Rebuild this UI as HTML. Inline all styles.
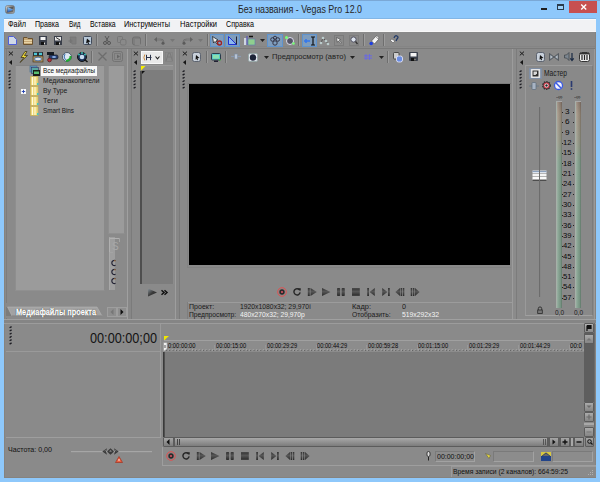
<!DOCTYPE html>
<html><head><meta charset="utf-8"><style>
html,body{margin:0;padding:0;width:600px;height:482px;overflow:hidden;background:#8ec8fb}
body{position:relative;font-family:"Liberation Sans", sans-serif}
div,span{position:absolute;box-sizing:border-box}
span{white-space:pre;transform-origin:0 0;display:block}
</style></head><body>
<div style="left:0px;top:0px;width:600px;height:1px;background:#7aa8d6;"></div>
<div style="left:4px;top:19px;width:592px;height:459px;background:#8a8a8a;"></div>
<div style="left:4px;top:477px;width:592px;height:1px;background:#86837f;"></div>
<span style="left:238px;top:4.58px;font-size:10.3px;line-height:10.3px;color:#262626;transform:scaleX(0.864);">Без названия - Vegas Pro 12.0</span>
<svg style="position:absolute;left:5px;top:5px;overflow:visible" width="10" height="9" viewBox="0 0 10 9"><defs><linearGradient id="ti1" x1="0" y1="0" x2="1" y2="1"><stop offset="0" stop-color="#e8e8e8"/><stop offset="0.5" stop-color="#7a7a7a"/><stop offset="1" stop-color="#d0d0d0"/></linearGradient><linearGradient id="ti2" x1="0" y1="0" x2="0" y2="1"><stop offset="0" stop-color="#9ad4ff"/><stop offset="1" stop-color="#1a50b0"/></linearGradient></defs><rect x="0.5" y="0.5" width="9" height="8" rx="2" fill="url(#ti1)" stroke="#6a6a6a" stroke-width="0.6"/><rect x="2" y="1.8" width="6.5" height="5.6" fill="#3a3a3a" opacity="0.55"/><path d="M2.5 2L8.5 4.8L2.5 7.5Z" fill="url(#ti2)"/></svg>
<div style="left:541px;top:8px;width:6px;height:2px;background:#1f1f1f;"></div>
<div style="left:557px;top:4px;width:7px;height:6px;border:1px solid #2a3a4a;border-top-width:2px;background:#9cd0f8"></div>
<div style="left:569px;top:1px;width:28px;height:12px;background:#c75050;"></div>
<svg style="position:absolute;left:580px;top:3px;overflow:visible" width="8" height="8" viewBox="0 0 8 8"><path d="M1.2 1.6L6.2 6.6M6.2 1.6L1.2 6.6" stroke="#fff" stroke-width="1.4"/></svg>
<div style="left:4px;top:18px;width:592px;height:1px;background:#82b6e6;"></div>
<div style="left:4px;top:19px;width:592px;height:13px;background:#f1f2f4;"></div>
<div style="left:4px;top:19px;width:592px;height:1px;background:#fbfbfb;"></div>
<div style="left:4px;top:31px;width:592px;height:1px;background:#f8f8f8;"></div>
<span style="left:8px;top:20.43px;font-size:9.3px;line-height:9.3px;color:#000;transform:scaleX(0.787);">Файл</span>
<span style="left:35px;top:20.43px;font-size:9.3px;line-height:9.3px;color:#000;transform:scaleX(0.764);">Правка</span>
<span style="left:69px;top:20.43px;font-size:9.3px;line-height:9.3px;color:#000;transform:scaleX(0.683);">Вид</span>
<span style="left:89.6px;top:20.43px;font-size:9.3px;line-height:9.3px;color:#000;transform:scaleX(0.744);">Вставка</span>
<span style="left:124.2px;top:20.43px;font-size:9.3px;line-height:9.3px;color:#000;transform:scaleX(0.793);">Инструменты</span>
<span style="left:179.8px;top:20.43px;font-size:9.3px;line-height:9.3px;color:#000;transform:scaleX(0.812);">Настройки</span>
<span style="left:225.8px;top:20.43px;font-size:9.3px;line-height:9.3px;color:#000;transform:scaleX(0.767);">Справка</span>
<div style="left:4px;top:32px;width:592px;height:15px;background:#8a8a8a;"></div>
<div style="left:4px;top:46px;width:592px;height:1px;background:#858585;"></div>
<div style="left:4px;top:48px;width:592px;height:1px;background:#7a7a7a;"></div>
<svg style="position:absolute;left:8px;top:36px;overflow:visible" width="9" height="9" viewBox="0 0 9 9"><path d="M0.5 0.5H5.5L8.5 3.5V8.5H0.5Z" fill="#cfd8e8" stroke="#4f5fd8"/></svg>
<svg style="position:absolute;left:23px;top:36px;overflow:visible" width="10" height="9" viewBox="0 0 10 9"><path d="M0.5 1.5H4L5 2.5H9.5V8.5H0.5Z" fill="#c8a977" stroke="#6b5230"/><path d="M1 4.5H9M1 6.5H9" stroke="#e8d5a8"/></svg>
<svg style="position:absolute;left:39px;top:36px;overflow:visible" width="8" height="9" viewBox="0 0 8 9"><rect x="0" y="0" width="8" height="9" fill="#3a3f4a"/><rect x="1.5" y="1" width="5" height="3" fill="#f4f4f4"/><rect x="2" y="6" width="4" height="3" fill="#111"/><rect x="5" y="6.5" width="1" height="2" fill="#ddd"/></svg>
<svg style="position:absolute;left:54px;top:36px;overflow:visible" width="8" height="9" viewBox="0 0 8 9"><rect x="0" y="0" width="8" height="9" fill="#3a3f4a"/><rect x="1" y="1" width="6" height="3.5" fill="#e8e8e8"/><path d="M2 1.5L6 4" stroke="#333"/><rect x="2" y="6" width="4" height="3" fill="#111"/><rect x="5" y="6.5" width="1" height="2" fill="#ddd"/></svg>
<svg style="position:absolute;left:68px;top:36px;overflow:visible" width="9" height="9" viewBox="0 0 9 9"><path d="M2 1H8V8H4Z" fill="#7e7e7e" stroke="#767676" stroke-width="0.8"/><path d="M0.5 5H4.5M2.5 3V7" stroke="#747474" stroke-width="1.2"/></svg>
<svg style="position:absolute;left:83px;top:36px;overflow:visible" width="9" height="9" viewBox="0 0 9 9"><rect x="0.5" y="0.5" width="8" height="8" rx="1" fill="#b8c8d8" stroke="#404a5a"/><path d="M4 2.5L7.5 5.5L5.5 6L6 8L5 8.3L4.5 6.5L3 7.5Z" fill="#111"/></svg>
<div style="left:96px;top:34px;width:1px;height:12px;background:#6e6e6e;"></div>
<div style="left:97px;top:34px;width:1px;height:12px;background:#9c9c9c;"></div>
<svg style="position:absolute;left:103px;top:36px;overflow:visible" width="8" height="9" viewBox="0 0 8 9"><path d="M2 0L5.5 6M6 0L2.5 6" stroke="#5a5a5a" stroke-width="1"/><circle cx="2" cy="7" r="1.5" fill="none" stroke="#555"/><circle cx="6" cy="7" r="1.5" fill="none" stroke="#555"/></svg>
<svg style="position:absolute;left:117px;top:36px;overflow:visible" width="10" height="9" viewBox="0 0 10 9"><rect x="0.5" y="0.5" width="5" height="6" rx="1" fill="none" stroke="#777"/><rect x="3.5" y="3.5" width="5.5" height="5.5" rx="1.5" fill="#8a8a8a" stroke="#777"/></svg>
<svg style="position:absolute;left:132px;top:36px;overflow:visible" width="10" height="9" viewBox="0 0 10 9"><rect x="0.5" y="1" width="8" height="8" rx="2" fill="#7e7e7e" stroke="#707070"/><rect x="3" y="3" width="5" height="6" fill="#888"/></svg>
<div style="left:145px;top:34px;width:1px;height:12px;background:#6e6e6e;"></div>
<div style="left:146px;top:34px;width:1px;height:12px;background:#9c9c9c;"></div>
<svg style="position:absolute;left:154px;top:37px;overflow:visible" width="11" height="8" viewBox="0 0 11 8"><path d="M2 2.5H6.5Q9.5 2.5 9.5 5.5" fill="none" stroke="#636363" stroke-width="1.6"/><path d="M2 2.5H6.5Q9.5 2.5 9.5 5.5" fill="none" stroke="#9a9a9a" stroke-width="0.5"/><path d="M0 2.5L3 0V5Z" fill="#636363"/><circle cx="9" cy="6.3" r="1.5" fill="#5a5a5a"/></svg>
<svg style="position:absolute;left:170.0px;top:38.5px;overflow:visible" width="5" height="3" viewBox="0 0 5 3"><path d="M0 0H5L2.5 3Z" fill="#777"/></svg>
<svg style="position:absolute;left:182px;top:37px;overflow:visible" width="11" height="8" viewBox="0 0 11 8"><path d="M9 2.5H4.5Q1.5 2.5 1.5 5.5" fill="none" stroke="#636363" stroke-width="1.6"/><path d="M9 2.5H4.5Q1.5 2.5 1.5 5.5" fill="none" stroke="#9a9a9a" stroke-width="0.5"/><path d="M11 2.5L8 0V5Z" fill="#636363"/><circle cx="2" cy="6.3" r="1.5" fill="#5a5a5a"/></svg>
<svg style="position:absolute;left:198.3px;top:38.5px;overflow:visible" width="5" height="3" viewBox="0 0 5 3"><path d="M0 0H5L2.5 3Z" fill="#777"/></svg>
<div style="left:207px;top:34px;width:1px;height:12px;background:#6e6e6e;"></div>
<div style="left:208px;top:34px;width:1px;height:12px;background:#9c9c9c;"></div>
<div style="left:210px;top:34px;width:14px;height:13px;background:#7f9dbd;border:1px solid #5f93cc"></div>
<svg style="position:absolute;left:212px;top:36px;overflow:visible" width="10" height="9" viewBox="0 0 10 9"><path d="M0.5 0.5L6 4L4 5L6 7.5L5 8L3 5.5L1.5 7Z" fill="#eee" stroke="#111" stroke-width="0.7"/><circle cx="7.5" cy="7" r="2" fill="none" stroke="#a02020" stroke-width="1.3"/></svg>
<div style="left:225px;top:34px;width:15px;height:13px;background:#7f9dbd;border:1px solid #5f93cc"></div>
<svg style="position:absolute;left:228px;top:36px;overflow:visible" width="9" height="9" viewBox="0 0 9 9"><path d="M0.5 0.5L8.5 8.5H0.5Z" fill="#8cb8f0" stroke="#2030d0"/><path d="M8.5 0.5V8.5" stroke="#223"/></svg>
<svg style="position:absolute;left:244px;top:35px;overflow:visible" width="12" height="10" viewBox="0 0 12 10"><rect x="0" y="3" width="2.5" height="7" fill="#cfd6e0"/><path d="M3 1V10" stroke="#5050c0"/><rect x="4" y="4" width="7" height="6" fill="#8fcf8f" stroke="#5a7ab0" stroke-width="0.6"/><path d="M5 1.5H9" stroke="#111" stroke-width="1.5"/></svg>
<svg style="position:absolute;left:260.0px;top:38.5px;overflow:visible" width="5" height="3" viewBox="0 0 5 3"><path d="M0 0H5L2.5 3Z" fill="#222"/></svg>
<div style="left:267px;top:34px;width:16px;height:13px;background:#7f9dbd;border:1px solid #5f93cc"></div>
<svg style="position:absolute;left:270px;top:36px;overflow:visible" width="10" height="10" viewBox="0 0 10 10"><circle cx="2.5" cy="3.5" r="1.8" fill="none" stroke="#334"/><circle cx="5" cy="1.8" r="1.6" fill="none" stroke="#334"/><circle cx="7.8" cy="3.5" r="1.8" fill="none" stroke="#334"/><circle cx="5" cy="7" r="2.2" fill="none" stroke="#334"/></svg>
<svg style="position:absolute;left:285px;top:36px;overflow:visible" width="10" height="9" viewBox="0 0 10 9"><circle cx="5" cy="5" r="3.5" fill="#556" stroke="#dde"/><circle cx="1.5" cy="1.5" r="1.5" fill="#7f7"/><circle cx="8.5" cy="7.5" r="1.3" fill="#7f7"/></svg>
<div style="left:298px;top:34px;width:1px;height:12px;background:#6e6e6e;"></div>
<div style="left:299px;top:34px;width:1px;height:12px;background:#9c9c9c;"></div>
<div style="left:302px;top:34px;width:15px;height:13px;background:#7f9dbd;border:1px solid #5f93cc"></div>
<svg style="position:absolute;left:304px;top:36px;overflow:visible" width="12" height="10" viewBox="0 0 12 10"><path d="M0 5H6M2 3V7" stroke="#3377ee" stroke-width="1.5"/><path d="M7 1H11M9 1V9M7 9H11" stroke="#111" stroke-width="1.2"/></svg>
<svg style="position:absolute;left:319px;top:36px;overflow:visible" width="11" height="10" viewBox="0 0 11 10"><path d="M2 7L4 2L7 5L9 8" stroke="#555" fill="none"/><circle cx="2" cy="7" r="1.3" fill="#bcc"/><circle cx="4" cy="2" r="1.3" fill="#bcc"/><circle cx="7" cy="5" r="1.3" fill="#bcc"/><circle cx="9" cy="8" r="1.3" fill="#bcc"/></svg>
<svg style="position:absolute;left:334px;top:35px;overflow:visible" width="10" height="11" viewBox="0 0 10 11"><rect x="0.5" y="0.5" width="9" height="10" fill="none" stroke="#7b7b7b"/><path d="M2.5 2.5L6.5 4.5L5 5.3L7.5 8L6.8 8.6L4.3 6L3.3 7.3Z" fill="#f0f0f0" stroke="#444" stroke-width="0.6"/></svg>
<svg style="position:absolute;left:349px;top:35px;overflow:visible" width="10" height="11" viewBox="0 0 10 11"><rect x="0.5" y="0.5" width="9" height="10" fill="none" stroke="#7d7d7d"/><circle cx="4.5" cy="4.5" r="2.6" fill="#dde4ee" stroke="#556"/><path d="M6.5 6.5L8.5 9" stroke="#333" stroke-width="1.3"/></svg>
<div style="left:363px;top:34px;width:1px;height:12px;background:#6e6e6e;"></div>
<div style="left:364px;top:34px;width:1px;height:12px;background:#9c9c9c;"></div>
<svg style="position:absolute;left:369px;top:35px;overflow:visible" width="10" height="11" viewBox="0 0 10 11"><path d="M2.5 6L6.5 1.5L9.5 4.5L5.5 9Z" fill="#f4f4f4" stroke="#555" stroke-width="0.7"/><path d="M6.5 1.5L8 0.5L9.8 2.5L9.5 4.5" fill="#ddd" stroke="#555" stroke-width="0.6"/><circle cx="2.2" cy="8.5" r="1.8" fill="#1f3fe0"/></svg>
<div style="left:383px;top:34px;width:1px;height:12px;background:#6e6e6e;"></div>
<div style="left:384px;top:34px;width:1px;height:12px;background:#9c9c9c;"></div>
<svg style="position:absolute;left:389px;top:35px;overflow:visible" width="10" height="11" viewBox="0 0 10 11"><path d="M1 5L4 8L6 6L3 4Z" fill="#eee" stroke="#555" stroke-width="0.6"/><path d="M5 3Q6 0 8 1Q10 2 8 4L7 6" fill="none" stroke="#223a66" stroke-width="1.3"/></svg>
<div style="left:4px;top:32px;width:1px;height:446px;background:#86837f;"></div>
<div style="left:6px;top:49px;width:1px;height:270px;background:#7d7d7d;"></div>
<svg style="position:absolute;left:8px;top:51px;overflow:visible" width="6" height="5" viewBox="0 0 6 5"><path d="M0.8 0.6L5 4.4M5 0.6L0.8 4.4" stroke="#1a1a1a" stroke-width="1"/></svg>
<svg style="position:absolute;left:8.7px;top:59.5px;overflow:visible" width="3" height="5" viewBox="0 0 3 5"><path d="M3 0V5L0 2.2Z" fill="#151515"/></svg>
<svg style="position:absolute;left:8.4px;top:70px;overflow:visible" width="3" height="20" viewBox="0 0 3 20"><path d="M0.6 1.8L2.6 0.6" stroke="#1c1c22" stroke-width="1.3"/><path d="M0.6 5.1L2.6 3.9" stroke="#1c1c22" stroke-width="1.3"/><path d="M0.6 8.4L2.6 7.2" stroke="#1c1c22" stroke-width="1.3"/><path d="M0.6 11.7L2.6 10.5" stroke="#1c1c22" stroke-width="1.3"/><path d="M0.6 15.0L2.6 13.8" stroke="#1c1c22" stroke-width="1.3"/><path d="M0.6 18.3L2.6 17.1" stroke="#1c1c22" stroke-width="1.3"/></svg>
<svg style="position:absolute;left:19px;top:51px;overflow:visible" width="9" height="12" viewBox="0 0 9 12"><path d="M6 0.5L2 6.5H5L1 11.5L8.5 4.5H5.5L8 0.5Z" fill="#f0dc3a" stroke="#3d3520" stroke-width="0.8"/></svg>
<svg style="position:absolute;left:33px;top:52px;overflow:visible" width="10" height="10" viewBox="0 0 10 10"><rect x="0" y="0" width="10" height="4" fill="#2a3038"/><rect x="1" y="0.8" width="3" height="2.4" fill="#4fc8d8"/><rect x="6" y="0.8" width="3" height="2.4" fill="#4fc8d8"/><rect x="0" y="4" width="10" height="6" fill="#a89060" stroke="#4a3a20" stroke-width="0.7"/><ellipse cx="5" cy="7" rx="3.5" ry="1.8" fill="#dde6ee" stroke="#2a5aa0" stroke-width="0.7"/></svg>
<svg style="position:absolute;left:47px;top:52px;overflow:visible" width="11" height="10" viewBox="0 0 11 10"><rect x="0" y="0" width="7" height="3" fill="#151a22"/><rect x="2" y="3" width="9" height="4" rx="1.5" fill="#2a3f70" stroke="#111" stroke-width="0.6"/><ellipse cx="7" cy="5" rx="2" ry="1" fill="#8ab0e8"/><circle cx="2.5" cy="8" r="1.8" fill="#c03040" stroke="#622"/></svg>
<svg style="position:absolute;left:62px;top:52px;overflow:visible" width="10" height="10" viewBox="0 0 10 10"><circle cx="5" cy="5" r="4.5" fill="#dde8f4" stroke="#334455" stroke-width="0.8"/><path d="M3 2Q1 5 3.5 8" stroke="#3a70b0" fill="none"/><path d="M8.5 4Q9 8 4 9" stroke="#22aa33" stroke-width="2" fill="none"/></svg>
<svg style="position:absolute;left:77px;top:52px;overflow:visible" width="11" height="10" viewBox="0 0 11 10"><circle cx="5" cy="5" r="4.5" fill="#1e3358" stroke="#111"/><circle cx="5" cy="5" r="2.3" fill="#c8dcf0"/><circle cx="2" cy="2.5" r="0.9" fill="#40d0c0"/><circle cx="8" cy="2.5" r="0.9" fill="#40d0c0"/><circle cx="5" cy="1" r="0.9" fill="#40d0c0"/><path d="M7.5 7.5L10.5 10" stroke="#111" stroke-width="1.5"/></svg>
<div style="left:91px;top:51px;width:1px;height:12px;background:#6e6e6e;"></div>
<div style="left:92px;top:51px;width:1px;height:12px;background:#9c9c9c;"></div>
<svg style="position:absolute;left:98px;top:52px;overflow:visible" width="9" height="9" viewBox="0 0 9 9"><path d="M0.5 0.5L8.5 8.5M8.5 0.5L0.5 8.5" stroke="#6d6d6d" stroke-width="1.3"/></svg>
<svg style="position:absolute;left:112px;top:51px;overflow:visible" width="11" height="11" viewBox="0 0 11 11"><rect x="0.5" y="0.5" width="10" height="10" rx="2" fill="none" stroke="#737373"/><rect x="2.5" y="2.5" width="6" height="6" fill="none" stroke="#7a7a7a"/><path d="M5 3.5L8 5.5L5 7.5Z" fill="#666"/></svg>
<div style="left:15px;top:65px;width:90px;height:226px;background:#9b9b9b;border-top:1px solid #858585;border-left:1px solid #8e8e8e;border-right:1px solid #8a8a8a;border-bottom:1px solid #909090"></div>
<div style="left:41px;top:66px;width:56px;height:10px;background:#f8f8f8;"></div>
<svg style="position:absolute;left:30px;top:66px;overflow:visible" width="10" height="10" viewBox="0 0 10 10"><rect x="0" y="0" width="7" height="6" fill="#6a9ac0" stroke="#3a6a90" stroke-width="0.6"/><rect x="1.5" y="1.5" width="7" height="6" fill="#5aa8a0" stroke="#336" stroke-width="0.6"/><rect x="3" y="4" width="7" height="6" fill="#1a1f1a"/><rect x="4" y="5.5" width="5" height="2.5" fill="#58c070"/></svg>
<span style="left:42.7px;top:67.23px;font-size:8px;line-height:8px;color:#111;transform:scaleX(0.799);">Все медиафайлы</span>
<svg style="position:absolute;left:30px;top:76px;overflow:visible" width="9" height="10" viewBox="0 0 9 10"><path d="M0.5 0.5H8V9.5H0.5Z" fill="#efdc80" stroke="#c8b050" stroke-width="0.7"/><path d="M2.5 1V9M5 1V9" stroke="#fffbe0" stroke-width="1"/><rect x="7" y="7" width="1.5" height="2" fill="#40c8c0"/></svg>
<span style="left:42.5px;top:76.83px;font-size:8px;line-height:8px;color:#1a1a1a;transform:scaleX(0.841);">Медианакопители</span>
<svg style="position:absolute;left:30px;top:86px;overflow:visible" width="9" height="10" viewBox="0 0 9 10"><path d="M0.5 0.5H8V9.5H0.5Z" fill="#efdc80" stroke="#c8b050" stroke-width="0.7"/><path d="M2.5 1V9M5 1V9" stroke="#fffbe0" stroke-width="1"/><rect x="7" y="7" width="1.5" height="2" fill="#40c8c0"/></svg>
<span style="left:42.5px;top:86.73px;font-size:8px;line-height:8px;color:#1a1a1a;transform:scaleX(0.848);">By Type</span>
<svg style="position:absolute;left:30px;top:96px;overflow:visible" width="9" height="10" viewBox="0 0 9 10"><path d="M0.5 0.5H8V9.5H0.5Z" fill="#efdc80" stroke="#c8b050" stroke-width="0.7"/><path d="M2.5 1V9M5 1V9" stroke="#fffbe0" stroke-width="1"/><rect x="7" y="7" width="1.5" height="2" fill="#40c8c0"/></svg>
<span style="left:42.5px;top:96.63px;font-size:8px;line-height:8px;color:#1a1a1a;transform:scaleX(0.903);">Теги</span>
<svg style="position:absolute;left:30px;top:106px;overflow:visible" width="9" height="10" viewBox="0 0 9 10"><path d="M0.5 0.5H8V9.5H0.5Z" fill="#efdc80" stroke="#c8b050" stroke-width="0.7"/><path d="M2.5 1V9M5 1V9" stroke="#fffbe0" stroke-width="1"/><rect x="7" y="7" width="1.5" height="2" fill="#40c8c0"/></svg>
<span style="left:42.5px;top:106.53px;font-size:8px;line-height:8px;color:#1a1a1a;transform:scaleX(0.792);">Smart Bins</span>
<svg style="position:absolute;left:21px;top:89px;overflow:visible" width="5" height="5" viewBox="0 0 5 5"><rect x="0" y="0" width="5" height="5" fill="#f8f8f8"/><path d="M0.8 2.5H4.2M2.5 0.8V4.2" stroke="#2040b0" stroke-width="0.9"/></svg>
<div style="left:108px;top:65px;width:17px;height:169px;background:#9b9b9b;border-top:1px solid #858585;border-left:1px solid #8e8e8e;border-right:1px solid #8a8a8a;border-bottom:1px solid #909090"></div>
<div style="left:109px;top:237px;width:6px;height:53px;background:#9e9e9e;border-left:1px solid #a8a8a8"></div>
<svg style="position:absolute;left:109px;top:238px;overflow:visible" width="11" height="15" viewBox="0 0 11 15"><path d="M10.5 0.5H0.5V14.5" fill="none" stroke="#b0b0b0"/><path d="M10.5 0.5V4M0.5 14.5H4" fill="none" stroke="#a4a4a4"/><text x="3" y="12" font-size="10" fill="#a8a8a8" font-family="Liberation Sans">S</text></svg>
<svg style="position:absolute;left:110.5px;top:259.5px;overflow:visible" width="6" height="6" viewBox="0 0 6 6"><path d="M4.5 0.8A2.5 2.5 0 1 0 4.5 5.2" fill="none" stroke="#223" stroke-width="1.2"/><path d="M4.5 0.8A2.5 2.5 0 0 0 3 1" stroke="#c08040"/></svg>
<svg style="position:absolute;left:110.5px;top:268.5px;overflow:visible" width="6" height="6" viewBox="0 0 6 6"><path d="M4.5 0.8A2.5 2.5 0 1 0 4.5 5.2" fill="none" stroke="#223" stroke-width="1.2"/><path d="M4.5 0.8A2.5 2.5 0 0 0 3 1" stroke="#c08040"/></svg>
<svg style="position:absolute;left:110.5px;top:277.5px;overflow:visible" width="6" height="6" viewBox="0 0 6 6"><path d="M4.5 0.8A2.5 2.5 0 1 0 4.5 5.2" fill="none" stroke="#223" stroke-width="1.2"/><path d="M4.5 0.8A2.5 2.5 0 0 0 3 1" stroke="#c08040"/></svg>
<div style="left:6px;top:303px;width:121px;height:15px;background:#8a8a8a;"></div>
<svg style="position:absolute;left:6px;top:306px;overflow:visible" width="100" height="12" viewBox="0 0 100 12"><path d="M0 1H1.5L6 10H0Z" fill="#7c7c7c"/><path d="M1.5 1H91L96 10H6Z" fill="#a2a2a2" stroke="#b8b8b8" stroke-width="0.5"/><path d="M6 10H96" stroke="#7a7a7a"/></svg>
<span style="left:15.7px;top:307.67px;font-size:8.3px;line-height:8.3px;color:#ffffff;transform:scaleX(0.882);font-weight:bold;-webkit-text-stroke:0.35px #fff;text-shadow:0 0 1px #000,0 0 1px #000">Медиафайлы проекта</span>
<div style="left:107px;top:307px;width:10px;height:10px;background:#8e8e8e;border:1px solid #9e9e9e"></div>
<svg style="position:absolute;left:110px;top:309px;overflow:visible" width="4" height="6" viewBox="0 0 4 6"><path d="M3.5 0V6L0.5 3Z" fill="#777"/></svg>
<div style="left:117px;top:307px;width:10px;height:10px;background:#8e8e8e;border:1px solid #9e9e9e"></div>
<svg style="position:absolute;left:120px;top:309px;overflow:visible" width="4" height="6" viewBox="0 0 4 6"><path d="M0.5 0V6L3.5 3Z" fill="#111"/></svg>
<div style="left:127px;top:49px;width:1px;height:270px;background:#a0a0a0;"></div>
<div style="left:128px;top:49px;width:3px;height:270px;background:#878787;"></div>
<div style="left:131px;top:49px;width:1px;height:270px;background:#7b7b7b;"></div>
<svg style="position:absolute;left:133px;top:51px;overflow:visible" width="6" height="5" viewBox="0 0 6 5"><path d="M0.8 0.6L5 4.4M5 0.6L0.8 4.4" stroke="#1a1a1a" stroke-width="1"/></svg>
<svg style="position:absolute;left:133.7px;top:59.5px;overflow:visible" width="3" height="5" viewBox="0 0 3 5"><path d="M3 0V5L0 2.2Z" fill="#151515"/></svg>
<svg style="position:absolute;left:133.4px;top:70px;overflow:visible" width="3" height="20" viewBox="0 0 3 20"><path d="M0.6 1.8L2.6 0.6" stroke="#1c1c22" stroke-width="1.3"/><path d="M0.6 5.1L2.6 3.9" stroke="#1c1c22" stroke-width="1.3"/><path d="M0.6 8.4L2.6 7.2" stroke="#1c1c22" stroke-width="1.3"/><path d="M0.6 11.7L2.6 10.5" stroke="#1c1c22" stroke-width="1.3"/><path d="M0.6 15.0L2.6 13.8" stroke="#1c1c22" stroke-width="1.3"/><path d="M0.6 18.3L2.6 17.1" stroke="#1c1c22" stroke-width="1.3"/></svg>
<div style="left:141px;top:51px;width:22px;height:13px;background:#e9e9e9;border:1px solid #f8f8f8"></div>
<svg style="position:absolute;left:143px;top:54px;overflow:visible" width="9" height="7" viewBox="0 0 9 7"><path d="M1.8 0.5Q0 3.5 1.8 6.5" fill="none" stroke="#c88a40" stroke-width="1"/><path d="M3.5 0.8V6.2M7.5 0.8V6.2M3.5 3.5H8.5" stroke="#2a3248" stroke-width="1"/></svg>
<svg style="position:absolute;left:155px;top:56px;overflow:visible" width="5" height="4" viewBox="0 0 5 4"><path d="M0.5 0.5L2.5 2.8L4.5 0.5" fill="none" stroke="#222" stroke-width="1.1"/></svg>
<svg style="position:absolute;left:165px;top:52px;overflow:visible" width="8" height="10" viewBox="0 0 8 10"><path d="M1 9L3.5 1H5L7.5 9M2.5 5H6" fill="none" stroke="#7a7a7a" stroke-width="1"/><rect x="0.5" y="0.5" width="7" height="9" fill="none" stroke="#7f7f7f" stroke-width="0.6"/></svg>
<div style="left:141px;top:65px;width:32px;height:6px;background:#909090;border-top:1px solid #9c9c9c;border-bottom:1px solid #7d7d7d"></div>
<svg style="position:absolute;left:141px;top:66px;overflow:visible" width="5" height="5" viewBox="0 0 5 5"><path d="M0 0H4.5L0 4.5Z" fill="#f8f000"/></svg>
<div style="left:141px;top:71px;width:32px;height:213px;background:#7d7d7d;"></div>
<div style="left:140px;top:71px;width:2px;height:213px;background:#4e4e4e;"></div>
<svg style="position:absolute;left:142px;top:71px;overflow:visible" width="3" height="3" viewBox="0 0 3 3"><path d="M0 0H3L0 3Z" fill="#111"/></svg>
<div style="left:173px;top:65px;width:1px;height:219px;background:#8d8d8d;"></div>
<svg style="position:absolute;left:148px;top:288px;overflow:visible" width="9" height="9" viewBox="0 0 9 9"><defs><linearGradient id="pl1" x1="0" y1="0" x2="1" y2="1"><stop offset="0" stop-color="#8a949a"/><stop offset="0.5" stop-color="#3a3a3a"/><stop offset="1" stop-color="#2a2a2a"/></linearGradient></defs><path d="M0 0.5L9 4.5L0 8.5Z" fill="url(#pl1)"/></svg>
<svg style="position:absolute;left:161px;top:290px;overflow:visible" width="7" height="5" viewBox="0 0 7 5"><path d="M0.5 0.3L3 2.5L0.5 4.7M3.5 0.3L6 2.5L3.5 4.7" fill="none" stroke="#111" stroke-width="1.5"/></svg>
<div style="left:175px;top:49px;width:1px;height:270px;background:#9e9e9e;"></div>
<div style="left:176px;top:49px;width:3px;height:270px;background:#878787;"></div>
<div style="left:179px;top:49px;width:1px;height:270px;background:#7a7a7a;"></div>
<svg style="position:absolute;left:182px;top:51px;overflow:visible" width="6" height="5" viewBox="0 0 6 5"><path d="M0.8 0.6L5 4.4M5 0.6L0.8 4.4" stroke="#1a1a1a" stroke-width="1"/></svg>
<svg style="position:absolute;left:182.7px;top:59.5px;overflow:visible" width="3" height="5" viewBox="0 0 3 5"><path d="M3 0V5L0 2.2Z" fill="#151515"/></svg>
<svg style="position:absolute;left:182.4px;top:70px;overflow:visible" width="3" height="20" viewBox="0 0 3 20"><path d="M0.6 1.8L2.6 0.6" stroke="#1c1c22" stroke-width="1.3"/><path d="M0.6 5.1L2.6 3.9" stroke="#1c1c22" stroke-width="1.3"/><path d="M0.6 8.4L2.6 7.2" stroke="#1c1c22" stroke-width="1.3"/><path d="M0.6 11.7L2.6 10.5" stroke="#1c1c22" stroke-width="1.3"/><path d="M0.6 15.0L2.6 13.8" stroke="#1c1c22" stroke-width="1.3"/><path d="M0.6 18.3L2.6 17.1" stroke="#1c1c22" stroke-width="1.3"/></svg>
<svg style="position:absolute;left:192px;top:52px;overflow:visible" width="9" height="10" viewBox="0 0 9 10"><rect x="0.5" y="0.5" width="8" height="9" rx="2" fill="#c8d0da" stroke="#4a5260" stroke-width="0.8"/><path d="M4 3L7.5 6L5.5 6.3L6 8L5 8.3L4.5 6.8L3.5 7.8Z" fill="#111"/></svg>
<div style="left:206px;top:51px;width:1px;height:12px;background:#6e6e6e;"></div>
<div style="left:207px;top:51px;width:1px;height:12px;background:#9c9c9c;"></div>
<svg style="position:absolute;left:211px;top:53px;overflow:visible" width="10" height="9" viewBox="0 0 10 9"><rect x="0.5" y="0.5" width="9" height="6.5" rx="1" fill="#5ac8c8" stroke="#2a3a4a"/><rect x="2" y="2" width="6" height="3.5" fill="#8ae0b0"/><rect x="3" y="7.5" width="4" height="1.5" fill="#223"/><rect x="8" y="6" width="1.5" height="1.5" fill="#3c3"/></svg>
<div style="left:225px;top:51px;width:1px;height:12px;background:#6e6e6e;"></div>
<div style="left:226px;top:51px;width:1px;height:12px;background:#9c9c9c;"></div>
<svg style="position:absolute;left:231px;top:54px;overflow:visible" width="10" height="5" viewBox="0 0 10 5"><path d="M0 2.5H10" stroke="#8a9ab0" stroke-width="1.2"/><rect x="3.5" y="0" width="3" height="5" fill="#b8c4d4" stroke="#7a8aa0" stroke-width="0.6"/></svg>
<svg style="position:absolute;left:248px;top:53px;overflow:visible" width="10" height="9" viewBox="0 0 10 9"><rect x="0.5" y="0.5" width="9" height="8" rx="1.5" fill="#e8eaf4" stroke="#9aa"/><circle cx="5" cy="4.5" r="3.2" fill="#1c2438"/></svg>
<svg style="position:absolute;left:264.0px;top:55.5px;overflow:visible" width="5" height="3" viewBox="0 0 5 3"><path d="M0 0H5L2.5 3Z" fill="#222"/></svg>
<span style="left:272px;top:52.73px;font-size:8px;line-height:8px;color:#1e1e1e;transform:scaleX(0.944);">Предпросмотр (авто)</span>
<svg style="position:absolute;left:350.0px;top:55.5px;overflow:visible" width="5" height="3" viewBox="0 0 5 3"><path d="M0 0H5L2.5 3Z" fill="#222"/></svg>
<svg style="position:absolute;left:364px;top:54px;overflow:visible" width="8" height="6" viewBox="0 0 8 6"><path d="M2 0V6M5.5 0V6M0 1.8H8M0 4.2H8" stroke="#6a6ae0" stroke-width="1"/></svg>
<svg style="position:absolute;left:378.5px;top:55.5px;overflow:visible" width="5" height="3" viewBox="0 0 5 3"><path d="M0 0H5L2.5 3Z" fill="#222"/></svg>
<div style="left:387px;top:51px;width:1px;height:12px;background:#6e6e6e;"></div>
<div style="left:388px;top:51px;width:1px;height:12px;background:#9c9c9c;"></div>
<svg style="position:absolute;left:393px;top:52px;overflow:visible" width="10" height="10" viewBox="0 0 10 10"><rect x="0.5" y="0.5" width="5.5" height="6.5" rx="1" fill="#ccc" stroke="#333" stroke-width="0.8"/><rect x="3.5" y="4" width="6" height="6" rx="2" fill="#6a8ce0" stroke="#eef" stroke-width="0.8"/></svg>
<svg style="position:absolute;left:409px;top:52px;overflow:visible" width="9" height="9" viewBox="0 0 9 9"><rect x="0" y="0" width="9" height="9" rx="1" fill="#3a404c"/><rect x="1.5" y="1" width="6" height="3.5" fill="#f4f4f4"/><rect x="2" y="6" width="5" height="3" fill="#111"/><rect x="5.5" y="6.5" width="1" height="2" fill="#ddd"/></svg>
<div style="left:189px;top:84px;width:321px;height:181px;background:#000;"></div>
<div style="left:187px;top:83px;width:324px;height:1px;background:#7b7b7b;"></div>
<div style="left:187px;top:83px;width:1px;height:185px;background:#838383;"></div>
<div style="left:187px;top:267px;width:324px;height:1px;background:#838383;"></div>
<svg style="position:absolute;left:277px;top:287px;overflow:visible" width="10" height="10" viewBox="0 0 10 10"><circle cx="5" cy="5" r="4.3" fill="none" stroke="#e05050" stroke-width="1"/><circle cx="5" cy="5" r="2.7" fill="#2a2a2a"/><circle cx="5" cy="5" r="1.1" fill="#d85060"/></svg>
<svg style="position:absolute;left:292px;top:287px;overflow:visible" width="10" height="10" viewBox="0 0 10 10"><defs><linearGradient id="g2" x1="0" y1="0" x2="0" y2="1"><stop offset="0" stop-color="#333"/><stop offset="0.45" stop-color="#575757"/><stop offset="1" stop-color="#2a2a2a"/></linearGradient></defs><path d="M7.4 2.8A3.1 3.1 0 1 0 8.1 5.3" fill="none" stroke="#262626" stroke-width="1.4"/><path d="M6 1L9 1.6L8.1 4.6Z" fill="#262626"/></svg>
<svg style="position:absolute;left:307px;top:287px;overflow:visible" width="10" height="10" viewBox="0 0 10 10"><defs><linearGradient id="g3" x1="0" y1="0" x2="0" y2="1"><stop offset="0" stop-color="#333"/><stop offset="0.45" stop-color="#575757"/><stop offset="1" stop-color="#2a2a2a"/></linearGradient></defs><rect x="0.8" y="1" width="2" height="8" fill="url(#g3)"/><path d="M3.5 1L9.8 5L3.5 9Z" fill="url(#g3)"/></svg>
<svg style="position:absolute;left:321px;top:287px;overflow:visible" width="10" height="10" viewBox="0 0 10 10"><defs><linearGradient id="g4" x1="0" y1="0" x2="0" y2="1"><stop offset="0" stop-color="#333"/><stop offset="0.45" stop-color="#575757"/><stop offset="1" stop-color="#2a2a2a"/></linearGradient></defs><path d="M1 1L9.5 5L1 9Z" fill="url(#g4)"/></svg>
<svg style="position:absolute;left:336px;top:287px;overflow:visible" width="10" height="10" viewBox="0 0 10 10"><defs><linearGradient id="g5" x1="0" y1="0" x2="0" y2="1"><stop offset="0" stop-color="#333"/><stop offset="0.45" stop-color="#575757"/><stop offset="1" stop-color="#2a2a2a"/></linearGradient></defs><rect x="1" y="1" width="3.2" height="8" rx="0.8" fill="url(#g5)"/><rect x="5.6" y="1" width="3.2" height="8" rx="0.8" fill="url(#g5)"/></svg>
<svg style="position:absolute;left:351px;top:287px;overflow:visible" width="10" height="10" viewBox="0 0 10 10"><defs><linearGradient id="g6" x1="0" y1="0" x2="0" y2="1"><stop offset="0" stop-color="#333"/><stop offset="0.45" stop-color="#575757"/><stop offset="1" stop-color="#2a2a2a"/></linearGradient></defs><rect x="1" y="1.2" width="7.8" height="7.6" fill="url(#g6)"/></svg>
<svg style="position:absolute;left:366px;top:287px;overflow:visible" width="10" height="10" viewBox="0 0 10 10"><defs><linearGradient id="g7" x1="0" y1="0" x2="0" y2="1"><stop offset="0" stop-color="#333"/><stop offset="0.45" stop-color="#575757"/><stop offset="1" stop-color="#2a2a2a"/></linearGradient></defs><rect x="1.2" y="1" width="1.8" height="8" fill="url(#g7)"/><path d="M8.8 1V9L3.6 5Z" fill="url(#g7)"/></svg>
<svg style="position:absolute;left:381px;top:287px;overflow:visible" width="10" height="10" viewBox="0 0 10 10"><defs><linearGradient id="g8" x1="0" y1="0" x2="0" y2="1"><stop offset="0" stop-color="#333"/><stop offset="0.45" stop-color="#575757"/><stop offset="1" stop-color="#2a2a2a"/></linearGradient></defs><rect x="7" y="1" width="1.8" height="8" fill="url(#g8)"/><path d="M1.2 1V9L6.4 5Z" fill="url(#g8)"/></svg>
<svg style="position:absolute;left:395px;top:287px;overflow:visible" width="10" height="10" viewBox="0 0 10 10"><defs><linearGradient id="g9" x1="0" y1="0" x2="0" y2="1"><stop offset="0" stop-color="#333"/><stop offset="0.45" stop-color="#575757"/><stop offset="1" stop-color="#2a2a2a"/></linearGradient></defs><path d="M5 1V9L0.4 5Z" fill="url(#g9)"/><rect x="5.6" y="1" width="1.5" height="8" fill="url(#g9)"/><rect x="7.8" y="1" width="1.5" height="8" fill="url(#g9)"/></svg>
<svg style="position:absolute;left:410px;top:287px;overflow:visible" width="10" height="10" viewBox="0 0 10 10"><defs><linearGradient id="g10" x1="0" y1="0" x2="0" y2="1"><stop offset="0" stop-color="#333"/><stop offset="0.45" stop-color="#575757"/><stop offset="1" stop-color="#2a2a2a"/></linearGradient></defs><rect x="0.7" y="1" width="1.5" height="8" fill="url(#g10)"/><rect x="2.9" y="1" width="1.5" height="8" fill="url(#g10)"/><path d="M5 1V9L9.6 5Z" fill="url(#g10)"/></svg>
<div style="left:187px;top:302px;width:325px;height:1px;background:#9c9c9c;"></div>
<div style="left:187px;top:302px;width:1px;height:17px;background:#7e7e7e;"></div>
<span style="left:188.8px;top:302.95px;font-size:7.5px;line-height:7.5px;color:#1a1a1a;transform:scaleX(0.940);">Проект:</span>
<span style="left:240px;top:302.95px;font-size:7.5px;line-height:7.5px;color:#1a1a1a;transform:scaleX(0.906);">1920x1080x32; 29,970i</span>
<span style="left:188.8px;top:310.95px;font-size:7.5px;line-height:7.5px;color:#1a1a1a;transform:scaleX(0.891);">Предпросмотр:</span>
<span style="left:240px;top:310.95px;font-size:7.5px;line-height:7.5px;color:#f4f4f4;transform:scaleX(0.898);">480x270x32; 29,970p</span>
<span style="left:351.5px;top:302.95px;font-size:7.5px;line-height:7.5px;color:#1a1a1a;transform:scaleX(0.991);">Кадр:</span>
<span style="left:401.5px;top:302.95px;font-size:7.5px;line-height:7.5px;color:#1a1a1a;transform:scaleX(0.959);">0</span>
<span style="left:351.5px;top:310.95px;font-size:7.5px;line-height:7.5px;color:#1a1a1a;transform:scaleX(0.896);">Отобразить:</span>
<span style="left:402px;top:310.95px;font-size:7.5px;line-height:7.5px;color:#f4f4f4;transform:scaleX(0.905);">519x292x32</span>
<div style="left:512px;top:49px;width:1px;height:270px;background:#9c9c9c;"></div>
<div style="left:513px;top:49px;width:3px;height:270px;background:#8b8b8b;"></div>
<div style="left:516px;top:49px;width:1px;height:270px;background:#7c7c7c;"></div>
<svg style="position:absolute;left:519px;top:51px;overflow:visible" width="6" height="5" viewBox="0 0 6 5"><path d="M0.8 0.6L5 4.4M5 0.6L0.8 4.4" stroke="#1a1a1a" stroke-width="1"/></svg>
<svg style="position:absolute;left:519.7px;top:59.5px;overflow:visible" width="3" height="5" viewBox="0 0 3 5"><path d="M3 0V5L0 2.2Z" fill="#151515"/></svg>
<svg style="position:absolute;left:519.4px;top:70px;overflow:visible" width="3" height="20" viewBox="0 0 3 20"><path d="M0.6 1.8L2.6 0.6" stroke="#1c1c22" stroke-width="1.3"/><path d="M0.6 5.1L2.6 3.9" stroke="#1c1c22" stroke-width="1.3"/><path d="M0.6 8.4L2.6 7.2" stroke="#1c1c22" stroke-width="1.3"/><path d="M0.6 11.7L2.6 10.5" stroke="#1c1c22" stroke-width="1.3"/><path d="M0.6 15.0L2.6 13.8" stroke="#1c1c22" stroke-width="1.3"/><path d="M0.6 18.3L2.6 17.1" stroke="#1c1c22" stroke-width="1.3"/></svg>
<svg style="position:absolute;left:536px;top:52px;overflow:visible" width="9" height="10" viewBox="0 0 9 10"><rect x="0.5" y="0.5" width="8" height="9" rx="2" fill="#c8d0da" stroke="#4a5260" stroke-width="0.8"/><path d="M4 3L7.5 6L5.5 6.3L6 8L5 8.3L4.5 6.8L3.5 7.8Z" fill="#111"/></svg>
<svg style="position:absolute;left:549px;top:53px;overflow:visible" width="10" height="8" viewBox="0 0 10 8"><path d="M0.5 0.5L5 4L0.5 7.5Z M9.5 0.5L5 4L9.5 7.5Z" fill="#7c8690" stroke="#4a4f55" stroke-width="0.8"/><path d="M1.5 2.5L3.5 4L1.5 5.5Z M8.5 2.5L6.5 4L8.5 5.5Z" fill="#c0c8d0"/></svg>
<svg style="position:absolute;left:564px;top:52px;overflow:visible" width="11" height="10" viewBox="0 0 11 10"><path d="M0.5 3H2.5L5 0.5V8.5L2.5 6H0.5Z" fill="#7c8690" stroke="#3a3f45" stroke-width="0.7"/><path d="M8 1V8M6.3 6.3L8 8.5L9.7 6.3" fill="none" stroke="#1a2a44" stroke-width="1.2"/></svg>
<svg style="position:absolute;left:579px;top:52px;overflow:visible" width="11" height="10" viewBox="0 0 11 10"><rect x="0.5" y="0.5" width="10" height="9" rx="2" fill="#f0f0f0" stroke="#333"/><path d="M3 3V8M5.5 3V8M8 3V8" stroke="#222" stroke-width="1.2"/><rect x="1" y="1" width="9" height="1.5" fill="#333"/></svg>
<div style="left:525px;top:65px;width:68px;height:251px;background:#898989;border-top:1px solid #9c9c9c;border-left:1px solid #9a9a9a;border-right:1px solid #7c7c7c;border-bottom:1px solid #a0a0a0"></div>
<div style="left:529px;top:68px;width:13px;height:11px;background:#8f9cae;border:1px solid #7f8ea4"></div>
<svg style="position:absolute;left:531px;top:69px;overflow:visible" width="9" height="9" viewBox="0 0 9 9"><rect x="0.8" y="0.8" width="7.4" height="7.4" fill="#2e2e2e" stroke="#f0f0f0" stroke-width="1.4"/><path d="M2.5 2.5H6V4.5L4.5 6H2.5Z" fill="#d8d8d8"/></svg>
<span style="left:544px;top:68.6px;font-size:8.5px;line-height:8.5px;color:#1a1a1a;transform:scaleX(0.782);">Мастер</span>
<svg style="position:absolute;left:529px;top:82px;overflow:visible" width="10" height="8" viewBox="0 0 10 8"><path d="M0 4H10" stroke="#6a7a8a" stroke-width="1"/><rect x="3" y="0.5" width="4" height="7" rx="0.8" fill="#a8b4c4" stroke="#5a6a7a" stroke-width="0.7"/></svg>
<svg style="position:absolute;left:542px;top:81px;overflow:visible" width="9" height="9" viewBox="0 0 9 9"><circle cx="4.5" cy="4.5" r="3.7" fill="#3a3a3a" stroke="#333" stroke-width="1.6" stroke-dasharray="1.3 1.1"/><circle cx="4.5" cy="4.5" r="3" fill="#d03848"/><circle cx="4.5" cy="4.5" r="2" fill="#f0f0f0"/><circle cx="4.5" cy="4.5" r="1.2" fill="#2a2a2a"/></svg>
<svg style="position:absolute;left:554px;top:81px;overflow:visible" width="9" height="9" viewBox="0 0 9 9"><circle cx="4.5" cy="4.5" r="4" fill="#f4f4ff" stroke="#3a5ae0" stroke-width="1.3"/><path d="M1.8 1.8L7.2 7.2" stroke="#3a5ae0" stroke-width="1.5"/></svg>
<svg style="position:absolute;left:570px;top:81px;overflow:visible" width="3" height="9" viewBox="0 0 3 9"><rect x="0.7" y="0" width="1.6" height="6" fill="#2a3a70"/><rect x="0.7" y="7.2" width="1.6" height="1.6" fill="#2a3a70"/></svg>
<span style="left:555.5px;top:94.42px;font-size:6px;line-height:6px;color:#1a1a1a;transform:scaleX(1.035);">-∞</span>
<span style="left:573.5px;top:94.42px;font-size:6px;line-height:6px;color:#1a1a1a;transform:scaleX(1.035);">-∞</span>
<div style="left:556px;top:101px;width:6px;height:207px;background:linear-gradient(#8c7c70 0px,#9a8c7c 12px,#929484 40px,#809c8a 60px,#7c9a88 100%);border-top:1px solid #a8a8a8;border-left:1px solid #a6b0a8"></div>
<div style="left:557px;top:102px;width:5px;height:206px;background:linear-gradient(90deg,rgba(255,255,255,0.22),rgba(255,255,255,0.05) 40%,rgba(0,0,0,0.04) 70%,rgba(0,0,0,0.22))"></div>
<div style="left:575px;top:101px;width:6px;height:207px;background:linear-gradient(#8c7c70 0px,#9a8c7c 12px,#929484 40px,#809c8a 60px,#7c9a88 100%);border-top:1px solid #a8a8a8;border-left:1px solid #a6b0a8"></div>
<div style="left:576px;top:102px;width:5px;height:206px;background:linear-gradient(90deg,rgba(255,255,255,0.22),rgba(255,255,255,0.05) 40%,rgba(0,0,0,0.04) 70%,rgba(0,0,0,0.22))"></div>
<span style="left:565.05px;top:108.03px;font-size:8px;line-height:8px;color:#0a0a0a;transform:scaleX(1.011);">3</span>
<div style="left:562px;top:112px;width:1px;height:1px;background:#222;"></div>
<div style="left:573px;top:112px;width:1px;height:1px;background:#222;"></div>
<span style="left:565.05px;top:118.35px;font-size:8px;line-height:8px;color:#0a0a0a;transform:scaleX(1.011);">6</span>
<div style="left:562px;top:122px;width:1px;height:1px;background:#222;"></div>
<div style="left:573px;top:122px;width:1px;height:1px;background:#222;"></div>
<span style="left:565.05px;top:128.67px;font-size:8px;line-height:8px;color:#0a0a0a;transform:scaleX(1.011);">9</span>
<div style="left:562px;top:132px;width:1px;height:1px;background:#222;"></div>
<div style="left:573px;top:132px;width:1px;height:1px;background:#222;"></div>
<span style="left:563.05px;top:138.99px;font-size:8px;line-height:8px;color:#0a0a0a;transform:scaleX(0.954);">12</span>
<div style="left:562px;top:143px;width:1px;height:1px;background:#222;"></div>
<div style="left:573px;top:143px;width:1px;height:1px;background:#222;"></div>
<span style="left:563.05px;top:149.31px;font-size:8px;line-height:8px;color:#0a0a0a;transform:scaleX(0.954);">15</span>
<div style="left:562px;top:153px;width:1px;height:1px;background:#222;"></div>
<div style="left:573px;top:153px;width:1px;height:1px;background:#222;"></div>
<span style="left:563.05px;top:159.63px;font-size:8px;line-height:8px;color:#0a0a0a;transform:scaleX(0.954);">18</span>
<div style="left:562px;top:163px;width:1px;height:1px;background:#222;"></div>
<div style="left:573px;top:163px;width:1px;height:1px;background:#222;"></div>
<span style="left:563.05px;top:169.95px;font-size:8px;line-height:8px;color:#0a0a0a;transform:scaleX(0.954);">21</span>
<div style="left:562px;top:174px;width:1px;height:1px;background:#222;"></div>
<div style="left:573px;top:174px;width:1px;height:1px;background:#222;"></div>
<span style="left:563.05px;top:180.27px;font-size:8px;line-height:8px;color:#0a0a0a;transform:scaleX(0.954);">24</span>
<div style="left:562px;top:184px;width:1px;height:1px;background:#222;"></div>
<div style="left:573px;top:184px;width:1px;height:1px;background:#222;"></div>
<span style="left:563.05px;top:190.59px;font-size:8px;line-height:8px;color:#0a0a0a;transform:scaleX(0.954);">27</span>
<div style="left:562px;top:194px;width:1px;height:1px;background:#222;"></div>
<div style="left:573px;top:194px;width:1px;height:1px;background:#222;"></div>
<span style="left:563.05px;top:200.91px;font-size:8px;line-height:8px;color:#0a0a0a;transform:scaleX(0.954);">30</span>
<div style="left:562px;top:205px;width:1px;height:1px;background:#222;"></div>
<div style="left:573px;top:205px;width:1px;height:1px;background:#222;"></div>
<span style="left:563.05px;top:211.23px;font-size:8px;line-height:8px;color:#0a0a0a;transform:scaleX(0.954);">33</span>
<div style="left:562px;top:215px;width:1px;height:1px;background:#222;"></div>
<div style="left:573px;top:215px;width:1px;height:1px;background:#222;"></div>
<span style="left:563.05px;top:221.55px;font-size:8px;line-height:8px;color:#0a0a0a;transform:scaleX(0.954);">36</span>
<div style="left:562px;top:225px;width:1px;height:1px;background:#222;"></div>
<div style="left:573px;top:225px;width:1px;height:1px;background:#222;"></div>
<span style="left:563.05px;top:231.87px;font-size:8px;line-height:8px;color:#0a0a0a;transform:scaleX(0.954);">39</span>
<div style="left:562px;top:236px;width:1px;height:1px;background:#222;"></div>
<div style="left:573px;top:236px;width:1px;height:1px;background:#222;"></div>
<span style="left:563.05px;top:242.19px;font-size:8px;line-height:8px;color:#0a0a0a;transform:scaleX(0.954);">42</span>
<div style="left:562px;top:246px;width:1px;height:1px;background:#222;"></div>
<div style="left:573px;top:246px;width:1px;height:1px;background:#222;"></div>
<span style="left:563.05px;top:252.51px;font-size:8px;line-height:8px;color:#0a0a0a;transform:scaleX(0.954);">45</span>
<div style="left:562px;top:256px;width:1px;height:1px;background:#222;"></div>
<div style="left:573px;top:256px;width:1px;height:1px;background:#222;"></div>
<span style="left:563.05px;top:262.83px;font-size:8px;line-height:8px;color:#0a0a0a;transform:scaleX(0.954);">48</span>
<div style="left:562px;top:267px;width:1px;height:1px;background:#222;"></div>
<div style="left:573px;top:267px;width:1px;height:1px;background:#222;"></div>
<span style="left:563.05px;top:273.15px;font-size:8px;line-height:8px;color:#0a0a0a;transform:scaleX(0.954);">51</span>
<div style="left:562px;top:277px;width:1px;height:1px;background:#222;"></div>
<div style="left:573px;top:277px;width:1px;height:1px;background:#222;"></div>
<span style="left:563.05px;top:283.47px;font-size:8px;line-height:8px;color:#0a0a0a;transform:scaleX(0.954);">54</span>
<div style="left:562px;top:287px;width:1px;height:1px;background:#222;"></div>
<div style="left:573px;top:287px;width:1px;height:1px;background:#222;"></div>
<span style="left:563.05px;top:293.79px;font-size:8px;line-height:8px;color:#0a0a0a;transform:scaleX(0.954);">57</span>
<div style="left:562px;top:298px;width:1px;height:1px;background:#222;"></div>
<div style="left:573px;top:298px;width:1px;height:1px;background:#222;"></div>
<span style="left:554.5px;top:308.57px;font-size:7px;line-height:7px;color:#1a1a1a;transform:scaleX(0.925);">0,0</span>
<span style="left:573.5px;top:308.57px;font-size:7px;line-height:7px;color:#1a1a1a;transform:scaleX(0.925);">0,0</span>
<div style="left:539px;top:107px;width:1px;height:190px;background:#6c6c6c;"></div>
<div style="left:540px;top:107px;width:1px;height:190px;background:#858585;"></div>
<svg style="position:absolute;left:532px;top:170px;overflow:visible" width="15" height="11" viewBox="0 0 15 11"><g><rect x="0" y="0" width="15" height="11" fill="#8a8a8a"/><rect x="0.5" y="0.5" width="6.5" height="2.5" fill="#dde4ee"/><rect x="8" y="0.5" width="6.5" height="2.5" fill="#dde4ee"/><rect x="0.5" y="1.2" width="6.5" height="0.8" fill="#7890b0"/><rect x="8" y="1.2" width="6.5" height="0.8" fill="#7890b0"/><rect x="0.5" y="3.6" width="6.5" height="2.6" fill="#f4f4f4"/><rect x="8" y="3.6" width="6.5" height="2.6" fill="#f4f4f4"/><rect x="0.5" y="6.8" width="6.5" height="3.6" fill="#fafafa"/><rect x="8" y="6.8" width="6.5" height="3.6" fill="#fafafa"/><rect x="0.5" y="9.6" width="6.5" height="1.2" fill="#333"/><rect x="8" y="9.6" width="6.5" height="1.2" fill="#333"/><rect x="7" y="0" width="1" height="11" fill="#6c6c6c"/></g></svg>
<svg style="position:absolute;left:537px;top:306px;overflow:visible" width="6" height="8" viewBox="0 0 6 8"><path d="M1.3 4V2.6A1.7 1.7 0 0 1 4.7 2.6V4" fill="none" stroke="#2a2a2a" stroke-width="0.9"/><rect x="0.7" y="4" width="4.6" height="3.4" fill="#777" stroke="#2a2a2a" stroke-width="0.8"/></svg>
<div style="left:594px;top:49px;width:1px;height:270px;background:#9a9a9a;"></div>
<div style="left:595px;top:32px;width:1px;height:446px;background:#86837f;"></div>
<div style="left:4px;top:319px;width:592px;height:1px;background:#a0a0a0;"></div>
<div style="left:4px;top:320px;width:592px;height:3px;background:#858585;"></div>
<div style="left:4px;top:323px;width:592px;height:1px;background:#9c9c9c;"></div>
<svg style="position:absolute;left:8.8px;top:325.8px;overflow:visible" width="3" height="20" viewBox="0 0 3 20"><path d="M0.6 1.8L2.6 0.6" stroke="#1c1c22" stroke-width="1.3"/><path d="M0.6 5.0L2.6 3.9" stroke="#1c1c22" stroke-width="1.3"/><path d="M0.6 8.3L2.6 7.1" stroke="#1c1c22" stroke-width="1.3"/><path d="M0.6 11.6L2.6 10.3" stroke="#1c1c22" stroke-width="1.3"/><path d="M0.6 14.8L2.6 13.6" stroke="#1c1c22" stroke-width="1.3"/><path d="M0.6 18.1L2.6 16.9" stroke="#1c1c22" stroke-width="1.3"/></svg>
<span style="left:90px;top:330.65px;font-size:14px;line-height:14px;color:#141414;transform:scaleX(0.906);">00:00:00;00</span>
<div style="left:6px;top:351px;width:155px;height:87px;background:#8a8a8a;border-top:1px solid #9a9a9a;border-right:1px solid #9e9e9e;border-bottom:1px solid #9e9e9e"></div>
<div style="left:160px;top:324px;width:1px;height:27px;background:#9a9a9a;"></div>
<div style="left:164px;top:324px;width:1px;height:16px;background:#9a9a9a;"></div>
<div style="left:162px;top:447px;width:434px;height:19px;border-left:1px solid #9e9e9e;border-bottom:1px solid #9e9e9e"></div>
<div style="left:164px;top:324px;width:420px;height:16px;background:#8a8a8a;"></div>
<svg style="position:absolute;left:164px;top:336px;overflow:visible" width="5" height="5" viewBox="0 0 5 5"><path d="M0 0H5L0 4.5Z" fill="#f0e800"/></svg>
<div style="left:164px;top:340px;width:420px;height:1px;background:#a0a0a0;"></div>
<div style="left:164px;top:341px;width:420px;height:11px;background:#8c8c8c;"></div>
<span style="left:167.7px;top:342.45px;font-size:7.5px;line-height:7.5px;color:#080808;transform:scaleX(0.776);">0:00:00:00</span>
<span style="left:216.0px;top:342.45px;font-size:7.5px;line-height:7.5px;color:#080808;transform:scaleX(0.762);">00:00:15:00</span>
<span style="left:266.6px;top:342.45px;font-size:7.5px;line-height:7.5px;color:#080808;transform:scaleX(0.762);">00:00:29:29</span>
<span style="left:317.2px;top:342.45px;font-size:7.5px;line-height:7.5px;color:#080808;transform:scaleX(0.762);">00:00:44:29</span>
<span style="left:367.8px;top:342.45px;font-size:7.5px;line-height:7.5px;color:#080808;transform:scaleX(0.762);">00:00:59:28</span>
<span style="left:418.4px;top:342.45px;font-size:7.5px;line-height:7.5px;color:#080808;transform:scaleX(0.762);">00:01:15:00</span>
<span style="left:469.0px;top:342.45px;font-size:7.5px;line-height:7.5px;color:#080808;transform:scaleX(0.762);">00:01:29:29</span>
<span style="left:519.6px;top:342.45px;font-size:7.5px;line-height:7.5px;color:#080808;transform:scaleX(0.762);">00:01:44:29</span>
<span style="left:570px;top:342.45px;font-size:7.5px;line-height:7.5px;color:#080808;transform:scaleX(0.821);">00:0</span>
<svg style="position:absolute;left:165px;top:349px;overflow:visible" width="420" height="2" viewBox="0 0 420 2"><rect x="0.00" y="0" width="1" height="2" fill="#a4a4a4"/><rect x="0.80" y="1" width="1" height="1" fill="#606060"/><rect x="3.37" y="0" width="1" height="2" fill="#a4a4a4"/><rect x="4.17" y="1" width="1" height="1" fill="#606060"/><rect x="6.75" y="0" width="1" height="2" fill="#a4a4a4"/><rect x="7.55" y="1" width="1" height="1" fill="#606060"/><rect x="10.12" y="0" width="1" height="2" fill="#a4a4a4"/><rect x="10.92" y="1" width="1" height="1" fill="#606060"/><rect x="13.49" y="0" width="1" height="2" fill="#a4a4a4"/><rect x="14.29" y="1" width="1" height="1" fill="#606060"/><rect x="16.87" y="0" width="1" height="2" fill="#a4a4a4"/><rect x="17.67" y="1" width="1" height="1" fill="#606060"/><rect x="20.24" y="0" width="1" height="2" fill="#a4a4a4"/><rect x="21.04" y="1" width="1" height="1" fill="#606060"/><rect x="23.61" y="0" width="1" height="2" fill="#a4a4a4"/><rect x="24.41" y="1" width="1" height="1" fill="#606060"/><rect x="26.99" y="0" width="1" height="2" fill="#a4a4a4"/><rect x="27.79" y="1" width="1" height="1" fill="#606060"/><rect x="30.36" y="0" width="1" height="2" fill="#a4a4a4"/><rect x="31.16" y="1" width="1" height="1" fill="#606060"/><rect x="33.73" y="0" width="1" height="2" fill="#a4a4a4"/><rect x="34.53" y="1" width="1" height="1" fill="#606060"/><rect x="37.11" y="0" width="1" height="2" fill="#a4a4a4"/><rect x="37.91" y="1" width="1" height="1" fill="#606060"/><rect x="40.48" y="0" width="1" height="2" fill="#a4a4a4"/><rect x="41.28" y="1" width="1" height="1" fill="#606060"/><rect x="43.85" y="0" width="1" height="2" fill="#a4a4a4"/><rect x="44.65" y="1" width="1" height="1" fill="#606060"/><rect x="47.23" y="0" width="1" height="2" fill="#a4a4a4"/><rect x="48.03" y="1" width="1" height="1" fill="#606060"/><rect x="50.60" y="0" width="1" height="2" fill="#a4a4a4"/><rect x="51.40" y="1" width="1" height="1" fill="#606060"/><rect x="53.97" y="0" width="1" height="2" fill="#a4a4a4"/><rect x="54.77" y="1" width="1" height="1" fill="#606060"/><rect x="57.35" y="0" width="1" height="2" fill="#a4a4a4"/><rect x="58.15" y="1" width="1" height="1" fill="#606060"/><rect x="60.72" y="0" width="1" height="2" fill="#a4a4a4"/><rect x="61.52" y="1" width="1" height="1" fill="#606060"/><rect x="64.09" y="0" width="1" height="2" fill="#a4a4a4"/><rect x="64.89" y="1" width="1" height="1" fill="#606060"/><rect x="67.47" y="0" width="1" height="2" fill="#a4a4a4"/><rect x="68.27" y="1" width="1" height="1" fill="#606060"/><rect x="70.84" y="0" width="1" height="2" fill="#a4a4a4"/><rect x="71.64" y="1" width="1" height="1" fill="#606060"/><rect x="74.21" y="0" width="1" height="2" fill="#a4a4a4"/><rect x="75.01" y="1" width="1" height="1" fill="#606060"/><rect x="77.59" y="0" width="1" height="2" fill="#a4a4a4"/><rect x="78.39" y="1" width="1" height="1" fill="#606060"/><rect x="80.96" y="0" width="1" height="2" fill="#a4a4a4"/><rect x="81.76" y="1" width="1" height="1" fill="#606060"/><rect x="84.33" y="0" width="1" height="2" fill="#a4a4a4"/><rect x="85.13" y="1" width="1" height="1" fill="#606060"/><rect x="87.71" y="0" width="1" height="2" fill="#a4a4a4"/><rect x="88.51" y="1" width="1" height="1" fill="#606060"/><rect x="91.08" y="0" width="1" height="2" fill="#a4a4a4"/><rect x="91.88" y="1" width="1" height="1" fill="#606060"/><rect x="94.45" y="0" width="1" height="2" fill="#a4a4a4"/><rect x="95.25" y="1" width="1" height="1" fill="#606060"/><rect x="97.83" y="0" width="1" height="2" fill="#a4a4a4"/><rect x="98.63" y="1" width="1" height="1" fill="#606060"/><rect x="101.20" y="0" width="1" height="2" fill="#a4a4a4"/><rect x="102.00" y="1" width="1" height="1" fill="#606060"/><rect x="104.57" y="0" width="1" height="2" fill="#a4a4a4"/><rect x="105.37" y="1" width="1" height="1" fill="#606060"/><rect x="107.95" y="0" width="1" height="2" fill="#a4a4a4"/><rect x="108.75" y="1" width="1" height="1" fill="#606060"/><rect x="111.32" y="0" width="1" height="2" fill="#a4a4a4"/><rect x="112.12" y="1" width="1" height="1" fill="#606060"/><rect x="114.69" y="0" width="1" height="2" fill="#a4a4a4"/><rect x="115.49" y="1" width="1" height="1" fill="#606060"/><rect x="118.07" y="0" width="1" height="2" fill="#a4a4a4"/><rect x="118.87" y="1" width="1" height="1" fill="#606060"/><rect x="121.44" y="0" width="1" height="2" fill="#a4a4a4"/><rect x="122.24" y="1" width="1" height="1" fill="#606060"/><rect x="124.81" y="0" width="1" height="2" fill="#a4a4a4"/><rect x="125.61" y="1" width="1" height="1" fill="#606060"/><rect x="128.19" y="0" width="1" height="2" fill="#a4a4a4"/><rect x="128.99" y="1" width="1" height="1" fill="#606060"/><rect x="131.56" y="0" width="1" height="2" fill="#a4a4a4"/><rect x="132.36" y="1" width="1" height="1" fill="#606060"/><rect x="134.93" y="0" width="1" height="2" fill="#a4a4a4"/><rect x="135.73" y="1" width="1" height="1" fill="#606060"/><rect x="138.31" y="0" width="1" height="2" fill="#a4a4a4"/><rect x="139.11" y="1" width="1" height="1" fill="#606060"/><rect x="141.68" y="0" width="1" height="2" fill="#a4a4a4"/><rect x="142.48" y="1" width="1" height="1" fill="#606060"/><rect x="145.05" y="0" width="1" height="2" fill="#a4a4a4"/><rect x="145.85" y="1" width="1" height="1" fill="#606060"/><rect x="148.43" y="0" width="1" height="2" fill="#a4a4a4"/><rect x="149.23" y="1" width="1" height="1" fill="#606060"/><rect x="151.80" y="0" width="1" height="2" fill="#a4a4a4"/><rect x="152.60" y="1" width="1" height="1" fill="#606060"/><rect x="155.17" y="0" width="1" height="2" fill="#a4a4a4"/><rect x="155.97" y="1" width="1" height="1" fill="#606060"/><rect x="158.55" y="0" width="1" height="2" fill="#a4a4a4"/><rect x="159.35" y="1" width="1" height="1" fill="#606060"/><rect x="161.92" y="0" width="1" height="2" fill="#a4a4a4"/><rect x="162.72" y="1" width="1" height="1" fill="#606060"/><rect x="165.29" y="0" width="1" height="2" fill="#a4a4a4"/><rect x="166.09" y="1" width="1" height="1" fill="#606060"/><rect x="168.67" y="0" width="1" height="2" fill="#a4a4a4"/><rect x="169.47" y="1" width="1" height="1" fill="#606060"/><rect x="172.04" y="0" width="1" height="2" fill="#a4a4a4"/><rect x="172.84" y="1" width="1" height="1" fill="#606060"/><rect x="175.41" y="0" width="1" height="2" fill="#a4a4a4"/><rect x="176.21" y="1" width="1" height="1" fill="#606060"/><rect x="178.79" y="0" width="1" height="2" fill="#a4a4a4"/><rect x="179.59" y="1" width="1" height="1" fill="#606060"/><rect x="182.16" y="0" width="1" height="2" fill="#a4a4a4"/><rect x="182.96" y="1" width="1" height="1" fill="#606060"/><rect x="185.53" y="0" width="1" height="2" fill="#a4a4a4"/><rect x="186.33" y="1" width="1" height="1" fill="#606060"/><rect x="188.91" y="0" width="1" height="2" fill="#a4a4a4"/><rect x="189.71" y="1" width="1" height="1" fill="#606060"/><rect x="192.28" y="0" width="1" height="2" fill="#a4a4a4"/><rect x="193.08" y="1" width="1" height="1" fill="#606060"/><rect x="195.65" y="0" width="1" height="2" fill="#a4a4a4"/><rect x="196.45" y="1" width="1" height="1" fill="#606060"/><rect x="199.03" y="0" width="1" height="2" fill="#a4a4a4"/><rect x="199.83" y="1" width="1" height="1" fill="#606060"/><rect x="202.40" y="0" width="1" height="2" fill="#a4a4a4"/><rect x="203.20" y="1" width="1" height="1" fill="#606060"/><rect x="205.77" y="0" width="1" height="2" fill="#a4a4a4"/><rect x="206.57" y="1" width="1" height="1" fill="#606060"/><rect x="209.15" y="0" width="1" height="2" fill="#a4a4a4"/><rect x="209.95" y="1" width="1" height="1" fill="#606060"/><rect x="212.52" y="0" width="1" height="2" fill="#a4a4a4"/><rect x="213.32" y="1" width="1" height="1" fill="#606060"/><rect x="215.89" y="0" width="1" height="2" fill="#a4a4a4"/><rect x="216.69" y="1" width="1" height="1" fill="#606060"/><rect x="219.27" y="0" width="1" height="2" fill="#a4a4a4"/><rect x="220.07" y="1" width="1" height="1" fill="#606060"/><rect x="222.64" y="0" width="1" height="2" fill="#a4a4a4"/><rect x="223.44" y="1" width="1" height="1" fill="#606060"/><rect x="226.01" y="0" width="1" height="2" fill="#a4a4a4"/><rect x="226.81" y="1" width="1" height="1" fill="#606060"/><rect x="229.39" y="0" width="1" height="2" fill="#a4a4a4"/><rect x="230.19" y="1" width="1" height="1" fill="#606060"/><rect x="232.76" y="0" width="1" height="2" fill="#a4a4a4"/><rect x="233.56" y="1" width="1" height="1" fill="#606060"/><rect x="236.13" y="0" width="1" height="2" fill="#a4a4a4"/><rect x="236.93" y="1" width="1" height="1" fill="#606060"/><rect x="239.51" y="0" width="1" height="2" fill="#a4a4a4"/><rect x="240.31" y="1" width="1" height="1" fill="#606060"/><rect x="242.88" y="0" width="1" height="2" fill="#a4a4a4"/><rect x="243.68" y="1" width="1" height="1" fill="#606060"/><rect x="246.25" y="0" width="1" height="2" fill="#a4a4a4"/><rect x="247.05" y="1" width="1" height="1" fill="#606060"/><rect x="249.63" y="0" width="1" height="2" fill="#a4a4a4"/><rect x="250.43" y="1" width="1" height="1" fill="#606060"/><rect x="253.00" y="0" width="1" height="2" fill="#a4a4a4"/><rect x="253.80" y="1" width="1" height="1" fill="#606060"/><rect x="256.37" y="0" width="1" height="2" fill="#a4a4a4"/><rect x="257.17" y="1" width="1" height="1" fill="#606060"/><rect x="259.75" y="0" width="1" height="2" fill="#a4a4a4"/><rect x="260.55" y="1" width="1" height="1" fill="#606060"/><rect x="263.12" y="0" width="1" height="2" fill="#a4a4a4"/><rect x="263.92" y="1" width="1" height="1" fill="#606060"/><rect x="266.49" y="0" width="1" height="2" fill="#a4a4a4"/><rect x="267.29" y="1" width="1" height="1" fill="#606060"/><rect x="269.87" y="0" width="1" height="2" fill="#a4a4a4"/><rect x="270.67" y="1" width="1" height="1" fill="#606060"/><rect x="273.24" y="0" width="1" height="2" fill="#a4a4a4"/><rect x="274.04" y="1" width="1" height="1" fill="#606060"/><rect x="276.61" y="0" width="1" height="2" fill="#a4a4a4"/><rect x="277.41" y="1" width="1" height="1" fill="#606060"/><rect x="279.99" y="0" width="1" height="2" fill="#a4a4a4"/><rect x="280.79" y="1" width="1" height="1" fill="#606060"/><rect x="283.36" y="0" width="1" height="2" fill="#a4a4a4"/><rect x="284.16" y="1" width="1" height="1" fill="#606060"/><rect x="286.73" y="0" width="1" height="2" fill="#a4a4a4"/><rect x="287.53" y="1" width="1" height="1" fill="#606060"/><rect x="290.11" y="0" width="1" height="2" fill="#a4a4a4"/><rect x="290.91" y="1" width="1" height="1" fill="#606060"/><rect x="293.48" y="0" width="1" height="2" fill="#a4a4a4"/><rect x="294.28" y="1" width="1" height="1" fill="#606060"/><rect x="296.85" y="0" width="1" height="2" fill="#a4a4a4"/><rect x="297.65" y="1" width="1" height="1" fill="#606060"/><rect x="300.23" y="0" width="1" height="2" fill="#a4a4a4"/><rect x="301.03" y="1" width="1" height="1" fill="#606060"/><rect x="303.60" y="0" width="1" height="2" fill="#a4a4a4"/><rect x="304.40" y="1" width="1" height="1" fill="#606060"/><rect x="306.97" y="0" width="1" height="2" fill="#a4a4a4"/><rect x="307.77" y="1" width="1" height="1" fill="#606060"/><rect x="310.35" y="0" width="1" height="2" fill="#a4a4a4"/><rect x="311.15" y="1" width="1" height="1" fill="#606060"/><rect x="313.72" y="0" width="1" height="2" fill="#a4a4a4"/><rect x="314.52" y="1" width="1" height="1" fill="#606060"/><rect x="317.09" y="0" width="1" height="2" fill="#a4a4a4"/><rect x="317.89" y="1" width="1" height="1" fill="#606060"/><rect x="320.47" y="0" width="1" height="2" fill="#a4a4a4"/><rect x="321.27" y="1" width="1" height="1" fill="#606060"/><rect x="323.84" y="0" width="1" height="2" fill="#a4a4a4"/><rect x="324.64" y="1" width="1" height="1" fill="#606060"/><rect x="327.21" y="0" width="1" height="2" fill="#a4a4a4"/><rect x="328.01" y="1" width="1" height="1" fill="#606060"/><rect x="330.59" y="0" width="1" height="2" fill="#a4a4a4"/><rect x="331.39" y="1" width="1" height="1" fill="#606060"/><rect x="333.96" y="0" width="1" height="2" fill="#a4a4a4"/><rect x="334.76" y="1" width="1" height="1" fill="#606060"/><rect x="337.33" y="0" width="1" height="2" fill="#a4a4a4"/><rect x="338.13" y="1" width="1" height="1" fill="#606060"/><rect x="340.71" y="0" width="1" height="2" fill="#a4a4a4"/><rect x="341.51" y="1" width="1" height="1" fill="#606060"/><rect x="344.08" y="0" width="1" height="2" fill="#a4a4a4"/><rect x="344.88" y="1" width="1" height="1" fill="#606060"/><rect x="347.45" y="0" width="1" height="2" fill="#a4a4a4"/><rect x="348.25" y="1" width="1" height="1" fill="#606060"/><rect x="350.83" y="0" width="1" height="2" fill="#a4a4a4"/><rect x="351.63" y="1" width="1" height="1" fill="#606060"/><rect x="354.20" y="0" width="1" height="2" fill="#a4a4a4"/><rect x="355.00" y="1" width="1" height="1" fill="#606060"/><rect x="357.57" y="0" width="1" height="2" fill="#a4a4a4"/><rect x="358.37" y="1" width="1" height="1" fill="#606060"/><rect x="360.95" y="0" width="1" height="2" fill="#a4a4a4"/><rect x="361.75" y="1" width="1" height="1" fill="#606060"/><rect x="364.32" y="0" width="1" height="2" fill="#a4a4a4"/><rect x="365.12" y="1" width="1" height="1" fill="#606060"/><rect x="367.69" y="0" width="1" height="2" fill="#a4a4a4"/><rect x="368.49" y="1" width="1" height="1" fill="#606060"/><rect x="371.07" y="0" width="1" height="2" fill="#a4a4a4"/><rect x="371.87" y="1" width="1" height="1" fill="#606060"/><rect x="374.44" y="0" width="1" height="2" fill="#a4a4a4"/><rect x="375.24" y="1" width="1" height="1" fill="#606060"/><rect x="377.81" y="0" width="1" height="2" fill="#a4a4a4"/><rect x="378.61" y="1" width="1" height="1" fill="#606060"/><rect x="381.19" y="0" width="1" height="2" fill="#a4a4a4"/><rect x="381.99" y="1" width="1" height="1" fill="#606060"/><rect x="384.56" y="0" width="1" height="2" fill="#a4a4a4"/><rect x="385.36" y="1" width="1" height="1" fill="#606060"/><rect x="387.93" y="0" width="1" height="2" fill="#a4a4a4"/><rect x="388.73" y="1" width="1" height="1" fill="#606060"/><rect x="391.31" y="0" width="1" height="2" fill="#a4a4a4"/><rect x="392.11" y="1" width="1" height="1" fill="#606060"/><rect x="394.68" y="0" width="1" height="2" fill="#a4a4a4"/><rect x="395.48" y="1" width="1" height="1" fill="#606060"/><rect x="398.05" y="0" width="1" height="2" fill="#a4a4a4"/><rect x="398.85" y="1" width="1" height="1" fill="#606060"/><rect x="401.43" y="0" width="1" height="2" fill="#a4a4a4"/><rect x="402.23" y="1" width="1" height="1" fill="#606060"/><rect x="404.80" y="0" width="1" height="2" fill="#a4a4a4"/><rect x="405.60" y="1" width="1" height="1" fill="#606060"/><rect x="408.17" y="0" width="1" height="2" fill="#a4a4a4"/><rect x="408.97" y="1" width="1" height="1" fill="#606060"/><rect x="411.55" y="0" width="1" height="2" fill="#a4a4a4"/><rect x="412.35" y="1" width="1" height="1" fill="#606060"/><rect x="414.92" y="0" width="1" height="2" fill="#a4a4a4"/><rect x="415.72" y="1" width="1" height="1" fill="#606060"/><rect x="418.29" y="0" width="1" height="2" fill="#a4a4a4"/><rect x="419.09" y="1" width="1" height="1" fill="#606060"/><rect x="421.67" y="0" width="1" height="2" fill="#a4a4a4"/><rect x="422.47" y="1" width="1" height="1" fill="#606060"/></svg>
<div style="left:214px;top:345px;width:1px;height:5px;background:#989898;"></div>
<div style="left:265px;top:345px;width:1px;height:5px;background:#989898;"></div>
<div style="left:316px;top:345px;width:1px;height:5px;background:#989898;"></div>
<div style="left:366px;top:345px;width:1px;height:5px;background:#989898;"></div>
<div style="left:417px;top:345px;width:1px;height:5px;background:#989898;"></div>
<div style="left:467px;top:345px;width:1px;height:5px;background:#989898;"></div>
<div style="left:518px;top:345px;width:1px;height:5px;background:#989898;"></div>
<div style="left:569px;top:345px;width:1px;height:5px;background:#989898;"></div>
<svg style="position:absolute;left:163px;top:342px;overflow:visible" width="5" height="10" viewBox="0 0 5 10"><path d="M0.5 0.5H4V7L0.5 9.5Z" fill="#f0f0f0" stroke="#888" stroke-width="0.5"/><rect x="1.5" y="3" width="1" height="3" fill="#555"/></svg>
<div style="left:164px;top:352px;width:420px;height:85px;background:#7b7b7b;"></div>
<div style="left:163px;top:352px;width:1px;height:85px;background:#3a3a3a;"></div>
<div style="left:164px;top:352px;width:1px;height:85px;background:#505050;"></div>
<div style="left:584px;top:333px;width:10px;height:69px;background:#5e5e5e;"></div>
<div style="left:584px;top:323px;width:10px;height:10px;background:linear-gradient(#b0b0b0,#8a8a8a);border:1px solid #5c5c5c;border-radius:1px"></div>
<svg style="position:absolute;left:586px;top:325px;overflow:visible" width="6" height="6" viewBox="0 0 6 6"><path d="M1 0.5V6M1 0.5H5V3.5H1" fill="#111" stroke="#111" stroke-width="1.2"/></svg>
<div style="left:584px;top:334px;width:10px;height:10px;background:linear-gradient(#aaaaaa,#858585);border:1px solid #5c5c5c;border-radius:1px"></div>
<svg style="position:absolute;left:586px;top:337px;overflow:visible" width="6" height="4" viewBox="0 0 6 4"><path d="M0.5 3.5L3 1L5.5 3.5Z" fill="#777"/></svg>
<div style="left:584px;top:402px;width:10px;height:10px;background:linear-gradient(#aaaaaa,#858585);border:1px solid #5c5c5c;border-radius:1px"></div>
<svg style="position:absolute;left:586px;top:405px;overflow:visible" width="6" height="4" viewBox="0 0 6 4"><path d="M0.5 0.5L3 3L5.5 0.5Z" fill="#6a6a6a"/></svg>
<div style="left:584px;top:412px;width:10px;height:10px;background:linear-gradient(#aaaaaa,#858585);border:1px solid #5c5c5c;border-radius:1px"></div>
<svg style="position:absolute;left:586px;top:414px;overflow:visible" width="6" height="6" viewBox="0 0 6 6"><path d="M3 0.5V5.5M0.5 3H5.5" stroke="#6a6a6a" stroke-width="1.2"/></svg>
<div style="left:584px;top:423px;width:10px;height:2px;background:#a8a8a8;"></div>
<div style="left:584px;top:427px;width:10px;height:10px;background:linear-gradient(#aaaaaa,#858585);border:1px solid #5c5c5c;border-radius:1px"></div>
<svg style="position:absolute;left:586px;top:431px;overflow:visible" width="6" height="2" viewBox="0 0 6 2"><path d="M0.5 1H5.5" stroke="#777" stroke-width="1"/></svg>
<div style="left:594px;top:323px;width:1px;height:115px;background:#6a6a6a;"></div>
<div style="left:164px;top:437px;width:420px;height:10px;background:#5e5e5e;"></div>
<div style="left:163px;top:437px;width:11px;height:10px;background:linear-gradient(#a6a6a6,#7c7c7c);border:1px solid #5c5c5c;border-radius:1px"></div>
<svg style="position:absolute;left:166px;top:439px;overflow:visible" width="4" height="6" viewBox="0 0 4 6"><path d="M3.5 0V6L0.5 3Z" fill="#111"/></svg>
<div style="left:174px;top:437px;width:374px;height:10px;background:linear-gradient(#a8a8a8,#7c7c7c);border:1px solid #5c5c5c;border-radius:1px"></div>
<div style="left:177px;top:439px;width:1px;height:6px;background:#444;"></div>
<div style="left:179px;top:439px;width:1px;height:6px;background:#444;"></div>
<div style="left:543px;top:439px;width:1px;height:6px;background:#555;"></div>
<div style="left:545px;top:439px;width:1px;height:6px;background:#555;"></div>
<div style="left:549px;top:437px;width:10px;height:10px;background:linear-gradient(#a6a6a6,#7c7c7c);border:1px solid #5c5c5c;border-radius:1px"></div>
<svg style="position:absolute;left:551px;top:439px;overflow:visible" width="6" height="6" viewBox="0 0 6 6"><path d="M1.5 0.5V5.5L4.5 3Z" fill="#111"/></svg>
<div style="left:560px;top:437px;width:10px;height:10px;background:linear-gradient(#a6a6a6,#7c7c7c);border:1px solid #5c5c5c;border-radius:1px"></div>
<svg style="position:absolute;left:562px;top:439px;overflow:visible" width="6" height="6" viewBox="0 0 6 6"><path d="M3 0.5V5.5M0.5 3H5.5" stroke="#111" stroke-width="1.4"/></svg>
<div style="left:574px;top:437px;width:10px;height:10px;background:linear-gradient(#a6a6a6,#7c7c7c);border:1px solid #5c5c5c;border-radius:1px"></div>
<svg style="position:absolute;left:576px;top:439px;overflow:visible" width="6" height="6" viewBox="0 0 6 6"><path d="M0.5 3H5.5" stroke="#111" stroke-width="1.4"/></svg>
<div style="left:585px;top:437px;width:9px;height:10px;background:linear-gradient(#a6a6a6,#7c7c7c);border:1px solid #5c5c5c;border-radius:1px"></div>
<svg style="position:absolute;left:587px;top:439px;overflow:visible" width="6" height="6" viewBox="0 0 6 6"><circle cx="2.5" cy="2.5" r="1.8" fill="none" stroke="#111" stroke-width="1"/><path d="M3.8 3.8L5.5 5.5" stroke="#111" stroke-width="1.2"/></svg>
<div style="left:571px;top:438px;width:2px;height:8px;background:#a8a8a8;"></div>
<svg style="position:absolute;left:166px;top:451px;overflow:visible" width="10" height="10" viewBox="0 0 10 10"><circle cx="5" cy="5" r="4.3" fill="none" stroke="#e05050" stroke-width="1"/><circle cx="5" cy="5" r="2.7" fill="#2a2a2a"/><circle cx="5" cy="5" r="1.1" fill="#d85060"/></svg>
<svg style="position:absolute;left:181px;top:451px;overflow:visible" width="10" height="10" viewBox="0 0 10 10"><defs><linearGradient id="g12" x1="0" y1="0" x2="0" y2="1"><stop offset="0" stop-color="#333"/><stop offset="0.45" stop-color="#575757"/><stop offset="1" stop-color="#2a2a2a"/></linearGradient></defs><path d="M7.4 2.8A3.1 3.1 0 1 0 8.1 5.3" fill="none" stroke="#262626" stroke-width="1.4"/><path d="M6 1L9 1.6L8.1 4.6Z" fill="#262626"/></svg>
<svg style="position:absolute;left:196px;top:451px;overflow:visible" width="10" height="10" viewBox="0 0 10 10"><defs><linearGradient id="g13" x1="0" y1="0" x2="0" y2="1"><stop offset="0" stop-color="#333"/><stop offset="0.45" stop-color="#575757"/><stop offset="1" stop-color="#2a2a2a"/></linearGradient></defs><rect x="0.8" y="1" width="2" height="8" fill="url(#g13)"/><path d="M3.5 1L9.8 5L3.5 9Z" fill="url(#g13)"/></svg>
<svg style="position:absolute;left:210px;top:451px;overflow:visible" width="10" height="10" viewBox="0 0 10 10"><defs><linearGradient id="g14" x1="0" y1="0" x2="0" y2="1"><stop offset="0" stop-color="#333"/><stop offset="0.45" stop-color="#575757"/><stop offset="1" stop-color="#2a2a2a"/></linearGradient></defs><path d="M1 1L9.5 5L1 9Z" fill="url(#g14)"/></svg>
<svg style="position:absolute;left:225px;top:451px;overflow:visible" width="10" height="10" viewBox="0 0 10 10"><defs><linearGradient id="g15" x1="0" y1="0" x2="0" y2="1"><stop offset="0" stop-color="#333"/><stop offset="0.45" stop-color="#575757"/><stop offset="1" stop-color="#2a2a2a"/></linearGradient></defs><rect x="1" y="1" width="3.2" height="8" rx="0.8" fill="url(#g15)"/><rect x="5.6" y="1" width="3.2" height="8" rx="0.8" fill="url(#g15)"/></svg>
<svg style="position:absolute;left:240px;top:451px;overflow:visible" width="10" height="10" viewBox="0 0 10 10"><defs><linearGradient id="g16" x1="0" y1="0" x2="0" y2="1"><stop offset="0" stop-color="#333"/><stop offset="0.45" stop-color="#575757"/><stop offset="1" stop-color="#2a2a2a"/></linearGradient></defs><rect x="1" y="1.2" width="7.8" height="7.6" fill="url(#g16)"/></svg>
<svg style="position:absolute;left:255px;top:451px;overflow:visible" width="10" height="10" viewBox="0 0 10 10"><defs><linearGradient id="g17" x1="0" y1="0" x2="0" y2="1"><stop offset="0" stop-color="#333"/><stop offset="0.45" stop-color="#575757"/><stop offset="1" stop-color="#2a2a2a"/></linearGradient></defs><rect x="1.2" y="1" width="1.8" height="8" fill="url(#g17)"/><path d="M8.8 1V9L3.6 5Z" fill="url(#g17)"/></svg>
<svg style="position:absolute;left:270px;top:451px;overflow:visible" width="10" height="10" viewBox="0 0 10 10"><defs><linearGradient id="g18" x1="0" y1="0" x2="0" y2="1"><stop offset="0" stop-color="#333"/><stop offset="0.45" stop-color="#575757"/><stop offset="1" stop-color="#2a2a2a"/></linearGradient></defs><rect x="7" y="1" width="1.8" height="8" fill="url(#g18)"/><path d="M1.2 1V9L6.4 5Z" fill="url(#g18)"/></svg>
<svg style="position:absolute;left:285px;top:451px;overflow:visible" width="10" height="10" viewBox="0 0 10 10"><defs><linearGradient id="g19" x1="0" y1="0" x2="0" y2="1"><stop offset="0" stop-color="#333"/><stop offset="0.45" stop-color="#575757"/><stop offset="1" stop-color="#2a2a2a"/></linearGradient></defs><path d="M5 1V9L0.4 5Z" fill="url(#g19)"/><rect x="5.6" y="1" width="1.5" height="8" fill="url(#g19)"/><rect x="7.8" y="1" width="1.5" height="8" fill="url(#g19)"/></svg>
<svg style="position:absolute;left:300px;top:451px;overflow:visible" width="10" height="10" viewBox="0 0 10 10"><defs><linearGradient id="g20" x1="0" y1="0" x2="0" y2="1"><stop offset="0" stop-color="#333"/><stop offset="0.45" stop-color="#575757"/><stop offset="1" stop-color="#2a2a2a"/></linearGradient></defs><rect x="0.7" y="1" width="1.5" height="8" fill="url(#g20)"/><rect x="2.9" y="1" width="1.5" height="8" fill="url(#g20)"/><path d="M5 1V9L9.6 5Z" fill="url(#g20)"/></svg>
<svg style="position:absolute;left:426px;top:451px;overflow:visible" width="5" height="10" viewBox="0 0 5 10"><rect x="1" y="0.5" width="3" height="5" rx="1.5" fill="#ddd" stroke="#222" stroke-width="0.8"/><path d="M2.5 6V9.5" stroke="#222"/></svg>
<div style="left:435px;top:451px;width:40px;height:11px;background:#8c8c8c;border-top:1px solid #7a7a7a;border-left:1px solid #7a7a7a;border-bottom:1px solid #a2a2a2;border-right:1px solid #a2a2a2"></div>
<span style="left:437px;top:452.73px;font-size:8px;line-height:8px;color:#111;transform:scaleX(0.875);">00:00:00;00</span>
<svg style="position:absolute;left:485px;top:453px;overflow:visible" width="6" height="6" viewBox="0 0 6 6"><path d="M0.5 0.5L5.5 2.5L4 5.5Z" fill="#e8d840" stroke="#554" stroke-width="0.5"/></svg>
<div style="left:493px;top:451px;width:41px;height:11px;background:#8c8c8c;border-top:1px solid #7a7a7a;border-left:1px solid #7a7a7a;border-bottom:1px solid #a2a2a2;border-right:1px solid #a2a2a2"></div>
<svg style="position:absolute;left:540.5px;top:451.5px;overflow:visible" width="10" height="9" viewBox="0 0 10 9"><rect x="0" y="0" width="10" height="4.5" fill="#d8c840"/><path d="M0 4.5L5 0.5L10 4.5Z" fill="#6a6a6a"/><rect x="0" y="4" width="10" height="5" fill="#22448a"/><path d="M0.5 4.5L5 1L9.5 4.5" fill="none" stroke="#2a3a5a" stroke-width="0.7"/></svg>
<div style="left:552px;top:451px;width:41px;height:11px;background:#8c8c8c;border-top:1px solid #7a7a7a;border-left:1px solid #7a7a7a;border-bottom:1px solid #a2a2a2;border-right:1px solid #a2a2a2"></div>
<span style="left:8px;top:445.93px;font-size:8px;line-height:8px;color:#111;transform:scaleX(0.886);">Частота: 0,00</span>
<div style="left:71px;top:451px;width:81px;height:1px;background:#a6a6a6;"></div>
<div style="left:71px;top:452px;width:81px;height:1px;background:#8f8f8f;"></div>
<svg style="position:absolute;left:102px;top:448px;overflow:visible" width="17" height="7" viewBox="0 0 17 7"><path d="M0.3 3.5L5 0.2L4 3.5L5 6.8Z M16.7 3.5L12 0.2L13 3.5L12 6.8Z M8.5 0.2L12 3.5L8.5 6.8L5 3.5Z" fill="#3a3a3a"/><path d="M8.5 1.8L10 3.5L8.5 3.9L7 3.5Z M1.8 3.3L4.2 1.5L3.6 3.3Z M15.2 3.3L12.8 1.5L13.4 3.3Z" fill="#7a7a7a"/></svg>
<svg style="position:absolute;left:115px;top:456px;overflow:visible" width="8" height="7" viewBox="0 0 8 7"><path d="M4 0.5L7.5 6.5H0.5Z" fill="#e86040" stroke="#a03020" stroke-width="0.7"/><path d="M4 3V5" stroke="#fff" stroke-width="0.8"/></svg>
<div style="left:451px;top:466px;width:145px;height:11px;background:#8a8a8a;border-left:1px solid #9c9c9c;border-top:1px solid #9a9a9a"></div>
<span style="left:453.3px;top:467.93px;font-size:8px;line-height:8px;color:#111;transform:scaleX(0.843);">Время записи (2 каналов): 664:59:25</span>
<div style="left:592px;top:470px;width:1px;height:1px;background:#b0b0b0;"></div>
<div style="left:590px;top:472px;width:1px;height:1px;background:#b0b0b0;"></div>
<div style="left:592px;top:472px;width:1px;height:1px;background:#b0b0b0;"></div>
<div style="left:588px;top:474px;width:1px;height:1px;background:#b0b0b0;"></div>
<div style="left:590px;top:474px;width:1px;height:1px;background:#b0b0b0;"></div>
<div style="left:592px;top:474px;width:1px;height:1px;background:#b0b0b0;"></div>
</body></html>
